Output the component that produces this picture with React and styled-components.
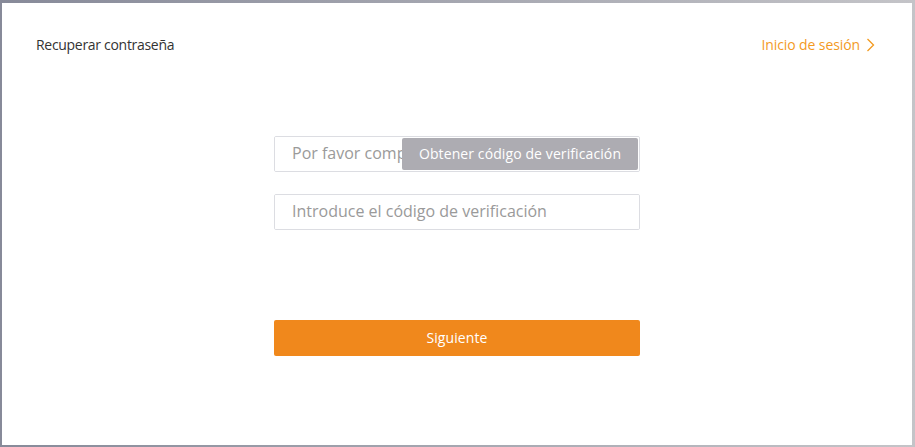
import React from "react";
import styled, { createGlobalStyle } from "styled-components";

const GlobalStyle = createGlobalStyle`
  html, body {
    margin: 0;
    padding: 0;
    background: #fff;
  }
  body {
    font-family: "Open Sans", "Noto Sans", sans-serif;
  }
`;

function App() {
  return (
    <>
      <GlobalStyle />
      <Frame>
        <Page>
          <Header>
            <Title>Recuperar contraseña</Title>
            <LoginLink href="#">
              Inicio de sesión
              <svg width="9" height="14" viewBox="0 0 9 14">
                <path d="M1.5 1l6 6-6 6" fill="none" stroke="#f39a1f" strokeWidth="1.3" />
              </svg>
            </LoginLink>
          </Header>
          <Form>
            <Field>
              <Input placeholder="Por favor complete su número de teléfono" />
              <CodeButton type="button">Obtener código de verificación</CodeButton>
            </Field>
            <Field>
              <Input placeholder="Introduce el código de verificación" />
            </Field>
            <Submit type="button">Siguiente</Submit>
          </Form>
        </Page>
      </Frame>
    </>
  );
}

export default App;

const Frame = styled.div`
  width: 915px;
  height: 447px;
  box-sizing: border-box;
  padding: 3px 3px 2px 2px;
  background: linear-gradient(to right, #878a99, #c4c4c8);
`;

const Page = styled.div`
  height: 100%;
  background: #fff;
  display: flex;
  flex-direction: column;
`;

const Header = styled.div`
  display: flex;
  justify-content: space-between;
  align-items: center;
  padding: 32px 37px 0 34px;
`;

const Title = styled.h1`
  margin: 0;
  font-size: 14px;
  font-weight: 400;
  color: #333;
  letter-spacing: -0.3px;
`;

const LoginLink = styled.a`
  display: flex;
  align-items: center;
  gap: 6px;
  font-size: 14px;
  color: #f39a1f;
  text-decoration: none;
  letter-spacing: -0.1px;
`;

const Form = styled.div`
  width: 366px;
  margin: 82px auto 0;
  display: flex;
  flex-direction: column;
`;

const Field = styled.div`
  position: relative;
  height: 36px;
  box-sizing: border-box;
  border: 1px solid #dcdde2;
  border-radius: 2px;
  margin-bottom: 22px;
  overflow: hidden;
`;

const Input = styled.input`
  width: 100%;
  height: 100%;
  box-sizing: border-box;
  border: none;
  outline: none;
  padding: 0 17px 2px;
  font-family: inherit;
  font-size: 16px;
  color: #333;
  &::placeholder {
    color: #9a9a9a;
  }
`;

const CodeButton = styled.button`
  position: absolute;
  top: 1px;
  right: 1px;
  width: 236px;
  height: 32px;
  padding-bottom: 2px;
  border: none;
  border-radius: 2px;
  background: #adacb2;
  color: #fff;
  font-family: inherit;
  font-size: 14px;
  letter-spacing: 0.1px;
  cursor: pointer;
`;

const Submit = styled.button`
  margin-top: 68px;
  height: 36px;
  padding-bottom: 2px;
  border: none;
  border-radius: 2px;
  background: #f0881c;
  color: #fff;
  font-family: inherit;
  font-size: 14px;
  letter-spacing: 0.1px;
  cursor: pointer;
`;
